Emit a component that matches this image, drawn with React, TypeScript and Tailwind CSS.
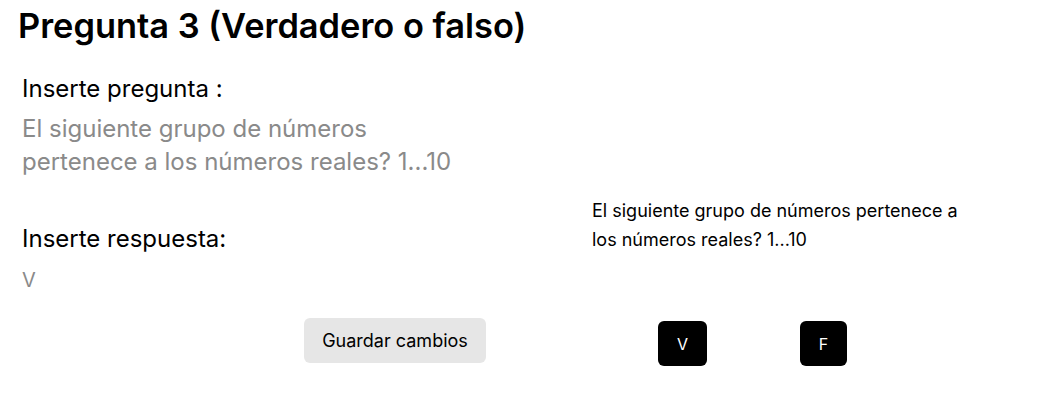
import React from "react";

const App: React.FC = () => {
    return (
        <div className="w-[1056px] h-[413px] bg-white font-['Inter',sans-serif] text-black">
            <h1 className="pl-[18px] pt-[6px] text-[34.4px] leading-[40px] font-semibold">
                Pregunta 3 (Verdadero o falso)
            </h1>
            <div className="flex">
                <div className="w-[592px] shrink-0 pl-[22px]">
                    <h3 className="mt-[27px] text-[24px] leading-[32px] font-normal">
                        Inserte pregunta :
                    </h3>
                    <p className="mt-[7px] w-[440px] text-[24px] leading-[33px] text-[#8a8a8a]">
                        El siguiente grupo de números pertenece a los números reales? 1...10
                    </p>
                    <h3 className="mt-[45px] text-[24px] leading-[32px] font-normal">
                        Inserte respuesta:
                    </h3>
                    <p className="mt-[11px] text-[20px] leading-[28px] text-[#8a8a8a]">V</p>
                    <button className="mt-[24px] ml-[282px] w-[182px] h-[45px] rounded-[6px] bg-[#e6e6e6] text-[18px]">
                        Guardar cambios
                    </button>
                </div>
                <div className="pt-[150px]">
                    <p className="w-[380px] text-[18px] leading-[29px]">
                        El siguiente grupo de números pertenece a los números reales? 1...10
                    </p>
                    <div className="mt-[67px] flex gap-[93px] pl-[66px]">
                        <button className="w-[49px] h-[45px] rounded-[6px] bg-black text-white text-[16px]">
                            V
                        </button>
                        <button className="w-[47px] h-[45px] rounded-[6px] bg-black text-white text-[16px]">
                            F
                        </button>
                    </div>
                </div>
            </div>
        </div>
    );
};

export default App;
